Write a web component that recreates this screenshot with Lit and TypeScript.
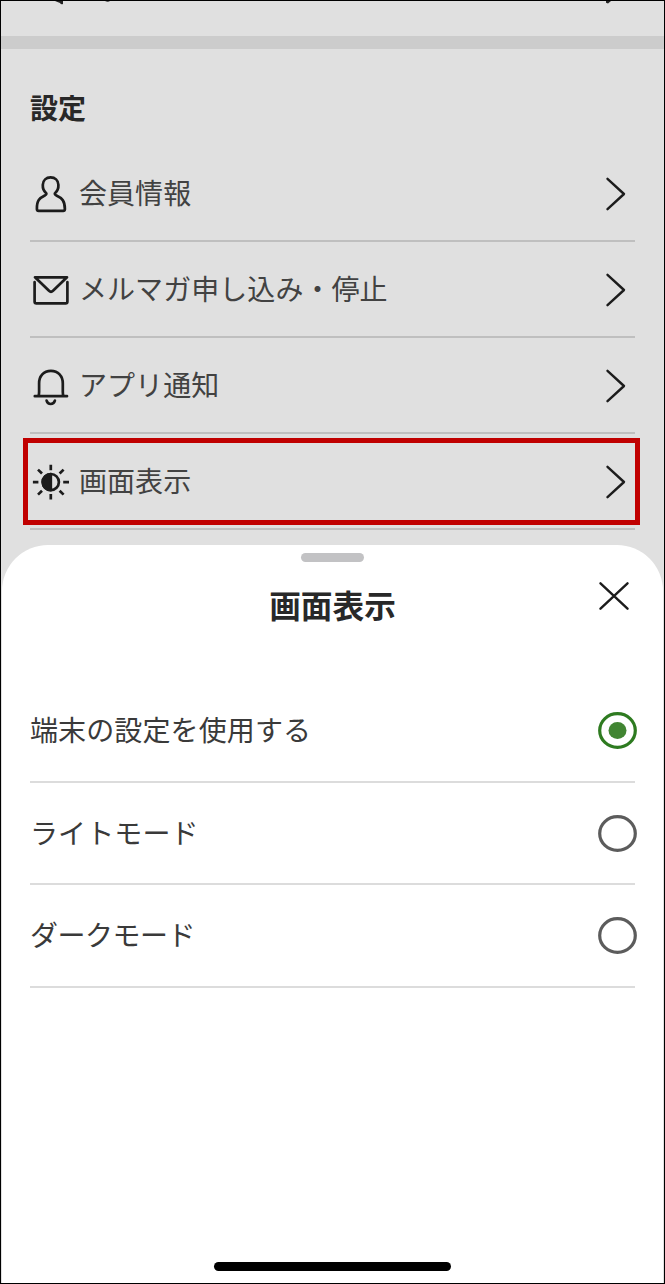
import { LitElement, html, css, svg, nothing } from "lit";
import { customElement, property, state } from "lit/decorators.js";

const icons = {
  member: svg`<path d="M13.2 17.2C10.6 15 9.6 12.4 9.8 8.8C10 4.2 13.2 1.4 17.6 1.4S25.2 4.2 25.4 8.8C25.6 12.4 24.6 15 22 17.2C21.6 18 22 18.6 23 19.2C29 22 32 24.8 31.9 33.2Q31.8 34.8 30.2 34.8H5.6Q4 34.8 3.9 33.2C3.6 24.8 6.4 22 12.2 19.2C13.2 18.6 13.6 18 13.2 17.2Z"/>`,
  mail: svg`<path d="M2 5.3H34L20 18.8Q18 20.8 16 18.8ZM1.6 10.2V29.4Q1.6 31.3 3.4 31.3H32.6Q34.4 31.3 34.4 29.4V10.2"/>`,
  bell: svg`<path d="M1.8 28.2H34M5.4 28C6 27 6.1 25.8 6.1 24V15.4C6.1 8 10.6 2.9 17.9 2.9S29.8 8 29.8 15.4V24C29.8 25.8 29.9 27 30.5 28"/><path d="M13.6 32.6Q14.6 36 17.7 36T21.9 32.6"/>`,
  brightness: svg`<circle cx="17.8" cy="18.1" r="8.1"/><path d="M17.8 10V26.2A8.1 8.1 0 0 1 17.8 10Z" fill="currentColor"/><path stroke-linecap="butt" d="M17.8 .8V6.3M17.8 30V35.6M-.1 18.2H5.4M30.2 18.2H36M5 5.6L9 9.5M30.6 5.6L26.6 9.5M5 30.6L9 26.7M30.6 30.6L26.6 26.7"/>`,
};
type IconName = keyof typeof icons;

@customElement("setting-row")
class SettingRow extends LitElement {
  @property() icon: IconName = "member";
  @property() label = "";
  static styles = css`
    :host { display: flex; align-items: center; box-sizing: border-box; height: 96px; padding: 1px 10px 0 0; border-bottom: 2px solid #bfbfbf; color: #1c1c1c; }
    svg { fill: none; stroke: currentColor; stroke-linecap: round; stroke-linejoin: round; overflow: visible; flex: none; }
    .icon { width: 36px; height: 36px; margin-left: 2.5px; stroke-width: 2.7; }
    .label { flex: 1; margin: -3px 0 0 10.5px; font-size: 28px; line-height: 40px; letter-spacing: .06px; color: #424242; }
    .chevron { width: 18px; height: 32px; stroke-width: 2.4; }
  `;
  render() {
    return html`<svg class="icon" viewBox="0 0 36 36">${icons[this.icon]}</svg>
      <span class="label">${this.label}</span>
      <svg class="chevron" viewBox="0 0 18 32"><path d="M.5 .8L17 16L.5 31.2" /></svg>`;
  }
}

@customElement("mode-option")
class ModeOption extends LitElement {
  @property() label = "";
  @property({ type: Boolean }) selected = false;
  @property({ type: Boolean }) tight = false;
  static styles = css`
    :host { display: flex; align-items: center; justify-content: space-between; box-sizing: border-box; height: 100.6px; margin-right: -2px; padding-top: 1px; font-size: 28px; line-height: 40px; color: #3a3a3a; }
    svg { width: 39px; height: 37px; fill: none; stroke: #5c5c5c; stroke-width: 3.2; }
    .on { stroke: #2e7b20; }
    .dot { fill: #418532; stroke: none; }
    .label { margin-top: -3px; letter-spacing: .12px; }
    .tight { letter-spacing: -.5px; }
  `;
  render() {
    return html`<span class=${this.tight ? "label tight" : "label"}>${this.label}</span>
      <svg class=${this.selected ? "on" : "off"} viewBox="0 0 39 37">
        <ellipse cx="19.5" cy="18.5" rx="17.8" ry="16.8" />
        ${this.selected ? svg`<ellipse class="dot" cx="19.5" cy="18.5" rx="9" ry="8.5" />` : nothing}
      </svg>`;
  }
}

@customElement("app-root")
class AppRoot extends LitElement {
  @state() private selected = 0;
  static styles = css`
    :host { display: block; font-family: "Noto Sans CJK JP", sans-serif; }
    .screen { box-sizing: border-box; width: 665px; height: 1284px; border: 1px solid #000; background: #e0e0e0; overflow: hidden; display: flex; flex-direction: column; }
    .previous { height: 35px; display: flex; justify-content: space-between; align-items: flex-start; padding: 0 48px 0 54px; flex: none; }
    .previous svg { display: block; overflow: visible; }
    .divider { height: 13px; background: #ccc; flex: none; }
    .settings { height: 496px; flex: none; padding: 0 29px; }
    h1 { margin: 0; padding-top: 38px; height: 59px; font-size: 28px; line-height: 40px; font-weight: 700; color: #282828; }
    .target { position: relative; }
    .highlight { position: absolute; left: -7px; top: 4px; width: 617px; height: 87px; box-sizing: border-box; border: 5px solid #c00000; }
    .sheet { flex: 1; margin: 0 1px; border-radius: 46px 46px 0 0; background: #fff; display: flex; flex-direction: column; align-items: center; }
    .handle { width: 63px; height: 9px; border-radius: 5px; margin-top: 8px; background: #c2c2c4; }
    .head { align-self: stretch; display: grid; grid-template-columns: 1fr auto 1fr; align-items: start; padding: 0 34px 0 28px; height: 118px; }
    h2 { grid-column: 2; margin: 19px 0 0 6px; font-size: 31.7px; line-height: 46px; font-weight: 700; color: #282828; }
    .close { justify-self: end; width: 30px; height: 28px; margin-top: 19.5px; stroke: #1c1c1c; stroke-width: 2.4; stroke-linecap: round; }
    .options { align-self: stretch; margin: 0 28px; }
    .option { border-bottom: 2px solid #dcdcdc; height: 100.6px; }
    .home { width: 237px; height: 9px; border-radius: 5px; background: #000; margin: auto 0 12.5px; }
  `;
  render() {
    const modes = [
      { label: "端末の設定を使用する", tight: false },
      { label: "ライトモード", tight: false },
      { label: "ダークモード", tight: true },
    ];
    return html`<main class="screen">
      <div class="previous">
        <svg width="54" height="4"><path d="M0 0H8V3Q6 4 5 2ZM50 0H55Q53 1.6 50 0Z" fill="#222" /></svg>
        <svg width="10" height="3"><path d="M0 0H5L2 2.4L0 1.8Z" fill="#222" /></svg>
      </div>
      <div class="divider"></div>
      <section class="settings">
        <h1>設定</h1>
        <setting-row icon="member" label="会員情報"></setting-row>
        <setting-row icon="mail" label="メルマガ申し込み・停止"></setting-row>
        <setting-row icon="bell" label="アプリ通知"></setting-row>
        <div class="target">
          <setting-row icon="brightness" label="画面表示"></setting-row>
          <div class="highlight"></div>
        </div>
      </section>
      <section class="sheet">
        <div class="handle"></div>
        <header class="head">
          <h2>画面表示</h2>
          <svg class="close" viewBox="0 0 30 28"><path d="M1.5 1.3L28.5 26.7M28.5 1.3L1.5 26.7" /></svg>
        </header>
        <div class="options">
          ${modes.map((m, i) => html`<div class="option" @click=${() => (this.selected = i)}>
            <mode-option .label=${m.label} .tight=${m.tight} .selected=${i === this.selected}></mode-option>
          </div>`)}
        </div>
        <div class="home"></div>
      </section>
    </main>`;
  }
}
